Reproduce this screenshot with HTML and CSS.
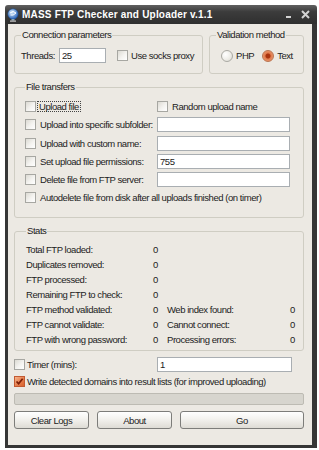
FILE: index.html
```html
<!DOCTYPE html>
<html>
<head>
<meta charset="utf-8">
<link rel="stylesheet" href="styles.css">
</head>
<body>
<div class="window">
  <div class="titlebar">
    <svg class="app-icon" width="12" height="14" viewBox="0 0 12 14">
      <defs>
        <radialGradient id="globe" cx="40%" cy="35%" r="65%">
          <stop offset="0" stop-color="#d6ecff"/>
          <stop offset="1" stop-color="#2a64b8"/>
        </radialGradient>
      </defs>
      <circle cx="6" cy="6" r="5.2" fill="url(#globe)" stroke="#1d4d8f" stroke-width="0.6"/>
      <path d="M3 5 Q6 2 9 5 Q6 8 3.5 7" fill="none" stroke="#fff" stroke-width="1"/>
      <rect x="4.5" y="11" width="3" height="1.5" fill="#8aa6b8"/>
      <rect x="3" y="12.5" width="6" height="1.2" fill="#c8c8c8"/>
    </svg>
    <span class="title">MASS FTP Checker and Uploader v.1.1</span>
    <span class="tb-btns">
      <svg width="6" height="9" viewBox="0 0 6 9"><rect x="0" y="6" width="5" height="2" fill="#d2d2d2"/></svg>
      <svg width="9" height="9" viewBox="0 0 9 9"><path d="M1 1 L8 8 M8 1 L1 8" stroke="#d2d2d2" stroke-width="2"/></svg>
    </span>
  </div>
  <div class="client">
    <div class="top-row">
      <fieldset class="group conn">
        <legend>Connection parameters</legend>
        <div class="conn-row">
          <span class="lbl-threads">Threads:</span>
          <input class="textbox threads" type="text" value="25" readonly>
          <span class="opt"><span class="check"></span><span>Use socks proxy</span></span>
        </div>
      </fieldset>
      <fieldset class="group valid">
        <legend>Validation method</legend>
        <div class="radio-row">
          <span class="radio"></span><span class="radio-lbl php">PHP</span>
          <span class="radio on"></span><span class="radio-lbl">Text</span>
        </div>
      </fieldset>
    </div>

    <fieldset class="group transfers">
      <legend>File transfers</legend>
      <div class="transfer-grid">
        <span class="opt"><span class="check"></span><span class="focus">Upload file</span></span>
        <span class="opt"><span class="check"></span><span>Random upload name</span></span>

        <span class="opt"><span class="check"></span><span>Upload into specific subfolder:</span></span>
        <input class="textbox" type="text" value="" readonly>

        <span class="opt"><span class="check"></span><span>Upload with custom name:</span></span>
        <input class="textbox" type="text" value="" readonly>

        <span class="opt"><span class="check"></span><span>Set upload file permissions:</span></span>
        <input class="textbox" type="text" value="755" readonly>

        <span class="opt"><span class="check"></span><span>Delete file from FTP server:</span></span>
        <input class="textbox" type="text" value="" readonly>

        <span class="opt wide"><span class="check"></span><span>Autodelete file from disk after all uploads finished (on timer)</span></span>
      </div>
    </fieldset>

    <fieldset class="group stats">
      <legend>Stats</legend>
      <div class="stats-grid">
        <span>Total FTP loaded:</span><span>0</span><span></span><span></span>
        <span>Duplicates removed:</span><span>0</span><span></span><span></span>
        <span>FTP processed:</span><span>0</span><span></span><span></span>
        <span>Remaining FTP to check:</span><span>0</span><span></span><span></span>
        <span>FTP method validated:</span><span>0</span><span>Web index found:</span><span>0</span>
        <span>FTP cannot validate:</span><span>0</span><span>Cannot connect:</span><span>0</span>
        <span>FTP with wrong password:</span><span>0</span><span>Processing errors:</span><span>0</span>
      </div>
    </fieldset>

    <div class="timer-row">
      <span class="opt tight"><span class="check"></span><span>Timer (mins):</span></span>
      <input class="textbox" type="text" value="1" readonly>
    </div>
    <div class="write-row">
      <span class="opt tight"><span class="check on"><svg width="9" height="9" viewBox="0 0 9 9"><path d="M1.5 4.5 L3.6 6.7 L7.6 1.8" fill="none" stroke="#7a1e06" stroke-width="1.7"/></svg></span><span>Write detected domains into result lists (for improved uploading)</span></span>
    </div>
    <div class="progress"></div>
    <div class="buttons">
      <button class="btn">Clear Logs</button>
      <button class="btn">About</button>
      <button class="btn go">Go</button>
    </div>
  </div>
</div>
</body>
</html>
```

FILE: styles.css
```css
* { box-sizing: border-box; }

body {
  margin: 0;
  background: #ffffff;
  font-family: "Liberation Sans", Arial, sans-serif;
  font-size: 9.5px;
  letter-spacing: -0.45px;
  color: #222;
}

.window {
  margin: 5px 0 0 5px;
  width: 312px;
  height: 443px;
  display: flex;
  flex-direction: column;
}

.titlebar {
  height: 19px;
  flex: none;
  display: flex;
  align-items: center;
  padding: 0 7px 0 2px;
  background: linear-gradient(#606060 0, #3c3c3c 35%, #2f2f2f 100%);
  border-radius: 3px 3px 0 0;
}

.app-icon { flex: none; margin-right: 3px; }

.title {
  flex: 1;
  font-family: "Liberation Sans", Arial, sans-serif;
  font-weight: bold;
  font-size: 10px;
  letter-spacing: 0.2px;
  color: #fff;
  white-space: nowrap;
}

.tb-btns {
  display: flex;
  align-items: center;
  gap: 9px;
}

.client {
  flex: 1;
  background: #ece9e3;
  border: solid #363636;
  border-width: 0 5px 3px 3px;
  padding: 5px 8px 0 6px;
  display: flex;
  flex-direction: column;
}

.top-row {
  display: flex;
  gap: 6px;
}

fieldset.group {
  margin: 0;
  min-width: 0;
  border: 1px solid #cfcdc3;
  border-radius: 3px;
  padding: 7px 6px 10px 6px;
}

legend {
  padding: 0 1px;
  line-height: 12px;
  color: #1a1a1a;
  white-space: nowrap;
}

.conn { width: 189px; }
.valid { width: 95px; }

.conn-row {
  display: flex;
  align-items: center;
  height: 15px;
}

.lbl-threads { width: 38px; }

.textbox {
  height: 15px;
  border: 1px solid #a9aeb2;
  background: #fff;
  font: inherit;
  letter-spacing: inherit;
  color: #222;
  padding: 0 2px;
  margin: 0;
  outline: none;
}

.threads { width: 47px; margin-right: 11px; }

.opt {
  display: flex;
  align-items: center;
  gap: 3px;
  white-space: nowrap;
}

.transfer-grid .opt { gap: 4px; }

.check {
  flex: none;
  width: 11px;
  height: 11px;
  border: 1px solid #a7a7a2;
  background: linear-gradient(135deg, #dcdad3 0, #f4f3f0 55%, #ffffff 100%);
  display: flex;
  align-items: center;
  justify-content: center;
}

.check.on {
  border-color: #c25a32;
  background: linear-gradient(135deg, #f6b58e 0, #e57a48 60%, #d8632f 100%);
}

.focus {
  border: 1px dotted #444;
  padding: 0 1px;
  margin-left: -3px;
  line-height: 9px;
}

.radio-row {
  display: flex;
  align-items: center;
  height: 15px;
  padding-left: 5px;
}

.radio {
  flex: none;
  width: 12px;
  height: 12px;
  border-radius: 50%;
  border: 1px solid #aaa9a3;
  background: radial-gradient(circle at 35% 35%, #ffffff 0, #f0efea 50%, #d8d6cf 100%);
}

.radio.on {
  border-color: #b97350;
  background: radial-gradient(circle, #a8320e 0, #a8320e 2px, #e0784a 3px, #f1ad86 100%);
}

.radio-lbl { margin-left: 3px; }
.radio-lbl.php { margin-right: 8px; }

.transfers {
  margin-top: 7px !important;
  padding: 6px 13px 12px 10px !important;
}

.transfer-grid {
  display: grid;
  grid-template-columns: 132px 133px;
  grid-auto-rows: 15px;
  row-gap: 3.3px;
  align-items: center;
}

.transfer-grid .textbox { width: 133px; }

.wide { grid-column: 1 / 3; }

.stats {
  margin-top: 7px !important;
  padding: 5px 8px 3px 11px !important;
}

.stats-grid {
  display: grid;
  grid-template-columns: 127px 14px 123px auto;
  grid-auto-rows: 15px;
  line-height: 15px;
  white-space: nowrap;
}

.timer-row {
  margin-top: 6px;
  height: 15px;
  display: grid;
  grid-template-columns: 143px 135px;
  align-items: center;
}

.timer-row .textbox { width: 135px; }

.opt.tight { gap: 2px; }

.write-row {
  margin-top: 2px;
  height: 15px;
  display: flex;
  align-items: center;
}

.progress {
  margin-top: 4px;
  height: 12px;
  border: 1px solid #bdbbb3;
  border-radius: 2px;
  background: #d7d5ce;
}

.buttons {
  margin-top: 6px;
  display: flex;
  gap: 8px;
}

.btn {
  width: 75px;
  height: 18px;
  margin: 0;
  padding: 0;
  border: 1px solid #7d7d7a;
  border-radius: 3px;
  background: linear-gradient(#ffffff 0, #f3f2ee 45%, #dedcd5 100%);
  font: inherit;
  letter-spacing: inherit;
  color: #222;
}

.btn.go { flex: 1; width: auto; }
```
